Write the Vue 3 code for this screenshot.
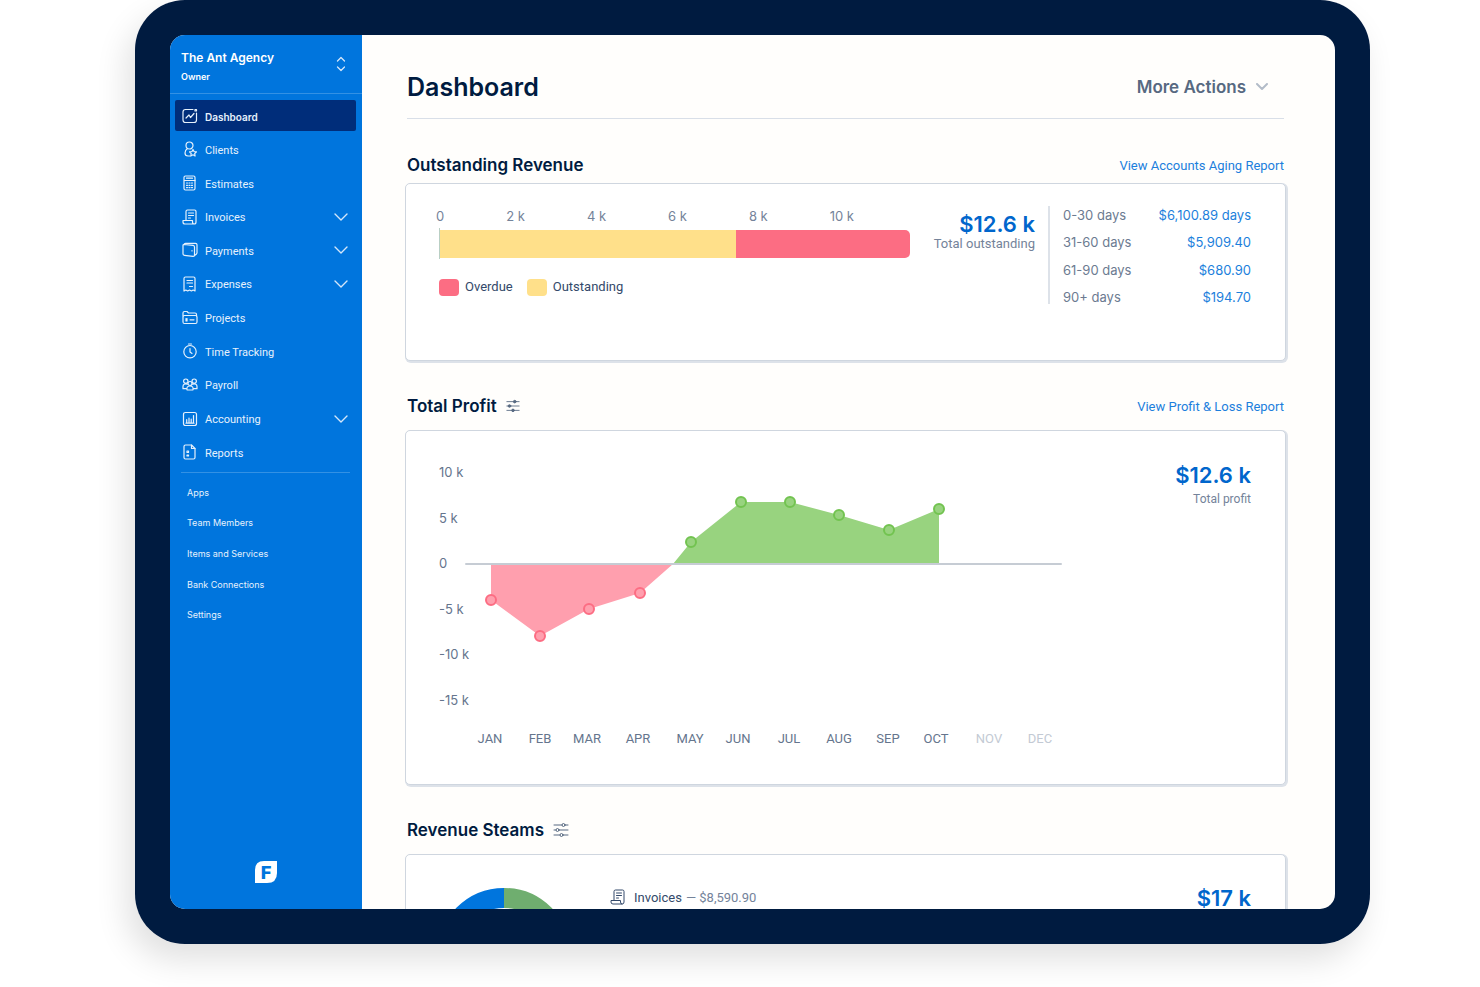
<script setup>
const navItems = [
  { label: 'Dashboard', icon: 'dashboard', active: true },
  { label: 'Clients', icon: 'clients' },
  { label: 'Estimates', icon: 'estimates' },
  { label: 'Invoices', icon: 'invoices', expandable: true },
  { label: 'Payments', icon: 'payments', expandable: true },
  { label: 'Expenses', icon: 'expenses', expandable: true },
  { label: 'Projects', icon: 'projects' },
  { label: 'Time Tracking', icon: 'time' },
  { label: 'Payroll', icon: 'payroll' },
  { label: 'Accounting', icon: 'accounting', expandable: true },
  { label: 'Reports', icon: 'reports' }
]

const secondaryItems = ['Apps', 'Team Members', 'Items and Services', 'Bank Connections', 'Settings']

const icons = {
  dashboard: ['M11 1.500H3.500Q1 1.500 1 4v8q0 2.500 2.500 2.500h8.500q2.500 0 2.500-2.500V5', 'M4 10l3-3 1.500 2.500L12 5.500', 'M13 1.500h1.500V3H13z'],
  clients: ['M11 4.500a3.500 3.500 0 1 1-7 0 3.500 3.500 0 0 1 7 0z', 'M5.500 7.500Q3 9 3 12q0 3 3 3h2', 'M11 8.500l1 2 2.500.300-1.800 1.700.400 2.500-2.100-1.200L8.800 15l.400-2.500-1.700-1.700 2.500-.300z'],
  estimates: ['M3.500 1h8q1.500 0 1.500 1.500v11q0 1.500-1.500 1.500h-8Q2 15 2 13.500v-11Q2 1 3.500 1z', 'M2.500 5.500h10.500M4.500 3.200h6', 'M4.500 8h1M7 8h1M9.500 8h1M4.500 10.300h1M7 10.300h1M9.500 10.300h1M4.500 12.600h1M7 12.600h1M9.500 12.600h1'],
  invoices: ['M4 11V2.500Q4 1 5.500 1h7Q14 1 14 2.500V13q0 2-1.800 2-1.700 0-1.700-2v-1.500H1V13q0 2 2 2h9', 'M6.500 4h5M6.500 6.500h5M6.500 9h2'],
  payments: ['M2 2.500l9 .800q1.500.200 1.500 1.700v8q0 1.500-1.500 1.400l-8.500-1Q1 13.200 1 12V3.500q0-1 1-1z', 'M2 2.500q.200-1.200 1.500-1.200H13.500q1.500 0 1.500 1.500V11q0 1-2.500 2.500', 'M10 8.500v.500'],
  expenses: ['M2 15V2.500Q2 1 3.500 1h8Q13 1 13 2.500V15l-1.800-1-1.800 1-1.900-1-1.800 1-1.900-1z', 'M5 4.500h5.500M5 7h5.500M7.500 10.500h3'],
  projects: ['M1 6V3q0-1.500 1.500-1.500H5l1.500 1.500h6.500Q14.500 3 14.500 4.500V6', 'M2.500 5.500h11q1.500 0 1.500 1.500v5q0 1.500-1.500 1.500h-11Q1 13.500 1 12V7q0-1.500 1.500-1.500z', 'M4 8.500v2.500M5 8.500v2.500M8 9.800h4'],
  time: ['M14.200 8.700a6.200 6.200 0 1 1-12.400 0 6.200 6.200 0 0 1 12.400 0z', 'M6.500 1h3M8 5.500V9l2 1.500'],
  payroll: ['M6 4.200a2.200 2.200 0 1 1-4.400 0 2.200 2.200 0 0 1 4.400 0z', 'M14.400 4.200a2.200 2.200 0 1 1-4.400 0 2.200 2.200 0 0 1 4.400 0z', 'M10 6.500a2 2 0 1 1-4 0 2 2 0 0 1 4 0z', 'M5 13q-.800-4 3-4t3 4z', 'M5.500 7.200Q1 6 1 9.500v2.200h3.500M10.500 7.200Q15 6 15 9.500v2.200h-3.500'],
  accounting: ['M3.500 1.500h9q2 0 2 2v9q0 2-2 2h-9q-2 0-2-2v-9q0-2 2-2z', 'M4 12.200h8M4.700 12V8.500M7 12V7M9.200 12V8M11.500 12V4.500'],
  reports: ['M9.500 1h-6Q2 1 2 2.500v11Q2 15 3.500 15h8q1.500 0 1.500-1.500v-9z', 'M9.500 1v3.500H13', 'M5 7h1.500v1.500H5zM5 11h1.500v1H5z']
}

const scale = ['0', '2 k', '4 k', '6 k', '8 k', '10 k']
const outstandingShare = 63

const aging = [
  { range: '0-30 days', amount: '$6,100.89 days' },
  { range: '31-60 days', amount: '$5,909.40' },
  { range: '61-90 days', amount: '$680.90' },
  { range: '90+ days', amount: '$194.70' }
]

const yTicks = [
  { label: '10 k', y: 12 },
  { label: '5 k', y: 58 },
  { label: '0', y: 103 },
  { label: '-5 k', y: 149 },
  { label: '-10 k', y: 194 },
  { label: '-15 k', y: 240 }
]

const months = [
  { label: 'JAN', x: 54 },
  { label: 'FEB', x: 104 },
  { label: 'MAR', x: 151 },
  { label: 'APR', x: 202 },
  { label: 'MAY', x: 254 },
  { label: 'JUN', x: 302 },
  { label: 'JUL', x: 353 },
  { label: 'AUG', x: 403 },
  { label: 'SEP', x: 452 },
  { label: 'OCT', x: 500 },
  { label: 'NOV', x: 553, future: true },
  { label: 'DEC', x: 604, future: true }
]

const baseline = 104
const crossing = 237
const losses = [[55, 140], [104, 176], [153, 149], [204, 133]]
const gains = [[255, 82], [305, 42], [354, 42], [403, 55], [453, 70], [503, 49]]
const toPoints = list => list.map(p => p.join(',')).join(' ')
const lossArea = toPoints([[55, baseline], ...losses, [crossing, baseline]])
const gainArea = toPoints([[crossing, baseline], ...gains, [503, baseline]])
</script>

<template>
  <div class="stage">
    <div class="device">
      <div class="screen">
        <aside class="sidebar">
          <button class="account" type="button">
            <span class="account-text">
              <span class="account-name">The Ant Agency</span>
              <span class="account-role">Owner</span>
            </span>
            <svg class="account-toggle" viewBox="0 0 10 16" aria-hidden="true">
              <path d="M1.500 5L5 1.500 8.500 5M1.500 11L5 14.500 8.500 11" />
            </svg>
          </button>

          <nav class="nav" aria-label="Main">
            <a v-for="item in navItems" :key="item.label" href="#" class="nav-link" :class="{ active: item.active }">
              <svg class="nav-icon" viewBox="0 0 16 16" aria-hidden="true">
                <path v-for="d in icons[item.icon]" :key="d" :d="d" />
              </svg>
              <span>{{ item.label }}</span>
              <svg v-if="item.expandable" class="nav-chevron" viewBox="0 0 14 8" aria-hidden="true">
                <path d="M1 1l6 6 6-6" />
              </svg>
            </a>
          </nav>

          <nav class="subnav" aria-label="More">
            <a v-for="label in secondaryItems" :key="label" href="#">{{ label }}</a>
          </nav>

          <svg class="logo" viewBox="0 0 22 22" role="img" aria-label="F">
            <path d="M9 0h13v12q0 10-10 10H0V9Q0 0 9 0z" />
            <text x="11" y="18" text-anchor="middle">F</text>
          </svg>
        </aside>

        <main class="main">
          <header class="page-header">
            <h1>Dashboard</h1>
            <button class="more" type="button">
              More Actions
              <svg viewBox="0 0 12 8" aria-hidden="true"><path d="M1 1l5 5 5-5" /></svg>
            </button>
          </header>

          <section class="section">
            <div class="section-head tight">
              <h2>Outstanding Revenue</h2>
              <a href="#">View Accounts Aging Report</a>
            </div>
            <div class="card revenue">
              <div class="revenue-chart">
                <div class="scale"><span v-for="s in scale" :key="s">{{ s }}</span></div>
                <div class="bar">
                  <div class="bar-outstanding" :style="{ width: outstandingShare + '%' }"></div>
                  <div class="bar-overdue"></div>
                </div>
                <div class="legend">
                  <span class="swatch red"></span><span class="legend-first">Overdue</span>
                  <span class="swatch yellow"></span><span>Outstanding</span>
                </div>
              </div>
              <div class="total">
                <strong>$12.6 k</strong>
                <span>Total outstanding</span>
              </div>
              <div class="aging-wrap">
                <table class="aging">
                  <tbody>
                    <tr v-for="row in aging" :key="row.range">
                      <th scope="row">{{ row.range }}</th>
                      <td>{{ row.amount }}</td>
                    </tr>
                  </tbody>
                </table>
              </div>
            </div>
          </section>

          <section class="section">
            <div class="section-head">
              <h2>Total Profit</h2>
              <button class="filter" type="button" aria-label="Filter total profit">
                <svg class="small" viewBox="0 0 16 14" aria-hidden="true">
                  <path d="M1 2h14M1 7h14M1 12h14" />
                  <circle cx="10" cy="2" r="1.500" /><circle cx="4" cy="7" r="1.500" /><circle cx="8" cy="12" r="1.500" />
                </svg>
              </button>
              <a href="#">View Profit &amp; Loss Report</a>
            </div>
            <div class="card profit">
              <svg class="profit-chart" viewBox="0 0 630 290" role="img" aria-label="Profit by month">
                <text v-for="t in yTicks" :key="t.label" class="tick" x="3" :y="t.y + 5">{{ t.label }}</text>
                <polygon class="loss-area" :points="lossArea" />
                <polygon class="gain-area" :points="gainArea" />
                <path class="zero" d="M30 104H625" />
                <circle v-for="p in losses" :key="p[0]" class="loss-dot" :cx="p[0]" :cy="p[1]" r="5" />
                <circle v-for="p in gains" :key="p[0]" class="gain-dot" :cx="p[0]" :cy="p[1]" r="5" />
                <text v-for="m in months" :key="m.label" class="month" :class="{ future: m.future }" :x="m.x" y="283">{{ m.label }}</text>
              </svg>
              <div class="total spaced">
                <strong>$12.6 k</strong>
                <span>Total profit</span>
              </div>
            </div>
          </section>

          <section class="section">
            <div class="section-head">
              <h2>Revenue Steams</h2>
              <button class="filter" type="button" aria-label="Filter revenue streams">
                <svg viewBox="0 0 16 14" aria-hidden="true">
                  <path d="M1 2h8M12 2h3M1 7h2M6 7h9M1 12h6M10 12h5" />
                  <circle cx="10.500" cy="2" r="1.500" /><circle cx="4.500" cy="7" r="1.500" /><circle cx="8.500" cy="12" r="1.500" />
                </svg>
              </button>
            </div>
            <div class="card streams">
              <svg class="donut" viewBox="0 0 134 134" aria-hidden="true">
                <path class="donut-green" d="M67 10a57 57 0 0 1 0 114" />
                <path class="donut-blue" d="M67 124a57 57 0 0 1 0-114" />
              </svg>
              <div class="stream">
                <svg viewBox="0 0 16 16" aria-hidden="true">
                  <path v-for="d in icons.invoices" :key="d" :d="d" />
                </svg>
                <span>Invoices</span><span class="stream-amount">— $8,590.90</span>
              </div>
              <div class="total"><strong>$17 k</strong></div>
            </div>
          </section>
        </main>
      </div>
    </div>
  </div>
</template>

<style>
body {
  margin: 0;
  background: #fff;
}
</style>

<style scoped>
* {
  box-sizing: border-box;
}

.stage {
  height: 100vh;
  padding: 0 110px 43px 135px;
  overflow: hidden;
  font-family: Inter, "Liberation Sans", sans-serif;
  color: #001b40;
}

.device {
  height: 100%;
  padding: 35px;
  border-radius: 50px;
  background: #001b40;
  box-shadow: -8px 16px 32px rgba(0, 0, 0, 0.12);
}

.screen {
  display: flex;
  height: 100%;
  overflow: hidden;
  border-radius: 15px;
  background: #fffefc;
}

a {
  text-decoration: none;
}

button {
  border: 0;
  background: none;
  font: inherit;
  color: inherit;
  cursor: pointer;
}

svg {
  fill: none;
  stroke-linecap: round;
  stroke-linejoin: round;
}

.sidebar {
  display: flex;
  flex: 0 0 192px;
  flex-direction: column;
  background: #0075dd;
  color: #fff;
}

.account {
  display: flex;
  align-items: center;
  justify-content: space-between;
  height: 59px;
  padding: 0 16px 0 11px;
  border-bottom: 1px solid #3391e4;
  text-align: left;
}

.account-text {
  display: flex;
  flex-direction: column;
  padding-top: 5px;
}

.account-name {
  font-size: 12px;
  font-weight: 600;
  line-height: 20px;
}

.account-role {
  font-size: 9px;
  font-weight: 600;
  line-height: 18px;
}

.account-toggle {
  width: 10px;
  height: 16px;
  stroke: #d4e7fa;
  stroke-width: 1.3;
}

.nav {
  display: grid;
  grid-auto-rows: 1fr;
  height: 370px;
  margin-top: 5px;
  padding: 0 6px 0 5px;
}

.nav-link {
  display: flex;
  align-items: center;
  align-self: center;
  gap: 7px;
  height: 31px;
  padding: 0 8px 0 7px;
  border-radius: 2px;
  font-family: Roboto, "Liberation Sans", sans-serif;
  font-size: 11px;
  color: #e6f1fc;
}

.nav-link span {
  padding-top: 2px;
}

.nav-link.active {
  background: #002d7a;
  font-family: Inter, "Liberation Sans", sans-serif;
  font-size: 10px;
  font-weight: 600;
}

.nav-icon {
  width: 16px;
  height: 16px;
  stroke: #e6f1fc;
  stroke-width: 1.2;
}

.nav-chevron {
  width: 14px;
  height: 8px;
  margin-left: auto;
  stroke: #d4e7fa;
  stroke-width: 1.4;
}

.subnav {
  display: grid;
  grid-auto-rows: 1fr;
  align-items: center;
  height: 158px;
  margin: 3px 12px 0 11px;
  padding: 4px 6px 0;
  border-top: 1px solid #3391e4;
}

.subnav a {
  font-size: 9px;
  color: #e6f1fc;
}

.logo {
  width: 22px;
  height: 22px;
  margin: auto auto 26px;
}

.logo path {
  fill: #fff;
}

.logo text {
  font-family: Roboto, "Liberation Sans", sans-serif;
  font-size: 19px;
  font-weight: 900;
  fill: #0075dd;
}

.main {
  flex: 1;
  min-width: 0;
  padding: 0 49px 0 43px;
}

.page-header {
  display: flex;
  align-items: center;
  justify-content: space-between;
  height: 84px;
  margin: 0 2px;
  padding-top: 20px;
  border-bottom: 1px solid #d9dfe8;
}

h1,
h2 {
  margin: 0;
  font-weight: 600;
}

h1 {
  font-size: 25px;
  line-height: 32px;
}

h2 {
  font-size: 17px;
  line-height: 24px;
}

.more {
  display: flex;
  align-items: center;
  gap: 10px;
  padding: 8px 16px;
  font-size: 17px;
  font-weight: 600;
  color: #576981;
}

.more svg {
  width: 12px;
  height: 8px;
  stroke: #b3bcc8;
  stroke-width: 2;
}

.section {
  margin-top: 33px;
}

.page-header + .section {
  margin-top: 34px;
}

.section-head {
  display: flex;
  align-items: center;
  height: 24px;
  margin: 0 2px 12px;
}

.section-head.tight {
  margin-bottom: 6px;
}

.section-head a {
  margin-left: auto;
  font-family: Roboto, "Liberation Sans", sans-serif;
  font-size: 13px;
  color: #1c7fdc;
}

.filter {
  display: flex;
  margin-left: 9px;
  padding: 0;
}

.filter svg {
  width: 16px;
  height: 14px;
  stroke: #576981;
}

.filter svg.small {
  width: 14px;
}

.filter .small circle {
  fill: #576981;
}

.card {
  display: flex;
  border: 1px solid #cfd6df;
  border-radius: 5px;
  background: #fff;
  box-shadow: 1px 1px 0 1px #dde2e9;
}

.revenue {
  min-height: 178px;
  padding: 17px 34px 0 30px;
}

.revenue-chart {
  flex: 1;
  min-width: 0;
  padding-top: 7px;
}

.scale {
  display: flex;
  justify-content: space-between;
  margin-right: 56px;
  font-size: 13px;
  line-height: 16px;
  color: #74839a;
}

.bar {
  display: flex;
  height: 31px;
  margin: 4px 0 0 3px;
  padding: 2px 0 1px;
  border-left: 1px solid #b9cfc4;
}

.bar-outstanding {
  background: #ffe08a;
}

.bar-overdue {
  flex: 1;
  border-radius: 0 5px 5px 0;
  background: #fc6d83;
}

.legend {
  display: flex;
  align-items: center;
  gap: 6px;
  margin: 19px 0 0 3px;
  font-family: Roboto, "Liberation Sans", sans-serif;
  font-size: 13px;
  line-height: 18px;
  color: #33496a;
}

.legend-first {
  margin-right: 8px;
}

.swatch {
  width: 20px;
  height: 17px;
  border-radius: 4px;
}

.red {
  background: #fc6d83;
}

.yellow {
  background: #ffe08a;
}

.total {
  display: flex;
  flex-direction: column;
  align-items: flex-end;
  font-family: Roboto, "Liberation Sans", sans-serif;
  font-size: 13px;
  line-height: 16px;
  color: #74839a;
}

.total strong {
  font-family: Inter, "Liberation Sans", sans-serif;
  font-size: 22px;
  font-weight: 600;
  line-height: 24px;
  color: #0066cc;
}

.revenue .total {
  width: 125px;
  padding-top: 11px;
}

.aging-wrap {
  flex: 0 0 203px;
  height: 98px;
  margin: 5px 0 0 13px;
  padding-left: 13px;
  border-left: 2px solid #dde2e9;
}

.aging {
  width: 100%;
  height: 110px;
  margin-top: -5px;
  border-collapse: collapse;
  font-size: 13px;
  line-height: 16px;
}

.aging th {
  padding: 0;
  font-weight: 400;
  text-align: left;
  color: #6c7b91;
}

.aging td {
  padding: 0;
  text-align: right;
  color: #1c7fdc;
}

.profit {
  align-items: flex-start;
  justify-content: space-between;
  min-height: 355px;
  padding: 29px 34px 0 30px;
}

.profit-chart {
  flex: 0 1 630px;
  min-width: 0;
}

.tick,
.month {
  font-size: 13px;
  fill: #65758d;
}

.month {
  font-family: Roboto, "Liberation Sans", sans-serif;
  text-anchor: middle;
}

.month.future {
  fill: #c3cad4;
}

.loss-area {
  fill: #ff9fae;
}

.gain-area {
  fill: #98d37f;
}

.zero {
  stroke: #c6ccd4;
  stroke-width: 2;
}

.loss-dot {
  fill: #ff9fae;
  stroke: #fc6d83;
  stroke-width: 2;
}

.gain-dot {
  fill: #98d37f;
  stroke: #72c350;
  stroke-width: 2;
}

.spaced {
  gap: 4px;
  padding-top: 3px;
  font-size: 12px;
}

.streams {
  min-height: 200px;
  padding: 33px 34px 33px 31px;
}

.donut {
  width: 134px;
  height: 134px;
}

.donut path {
  stroke-width: 20;
  stroke-linecap: butt;
}

.donut-blue {
  stroke: #0075dd;
}

.donut-green {
  stroke: #6fae6f;
}

.stream {
  display: flex;
  flex: 1;
  align-items: center;
  gap: 4px;
  height: 18px;
  margin-left: 39px;
  font-family: Roboto, "Liberation Sans", sans-serif;
  font-size: 13px;
  color: #33496a;
}

.stream svg {
  width: 16px;
  height: 16px;
  margin-right: 4px;
  stroke: #33496a;
}

.stream-amount {
  color: #74839a;
}

.streams .total strong {
  line-height: 20px;
}
</style>
